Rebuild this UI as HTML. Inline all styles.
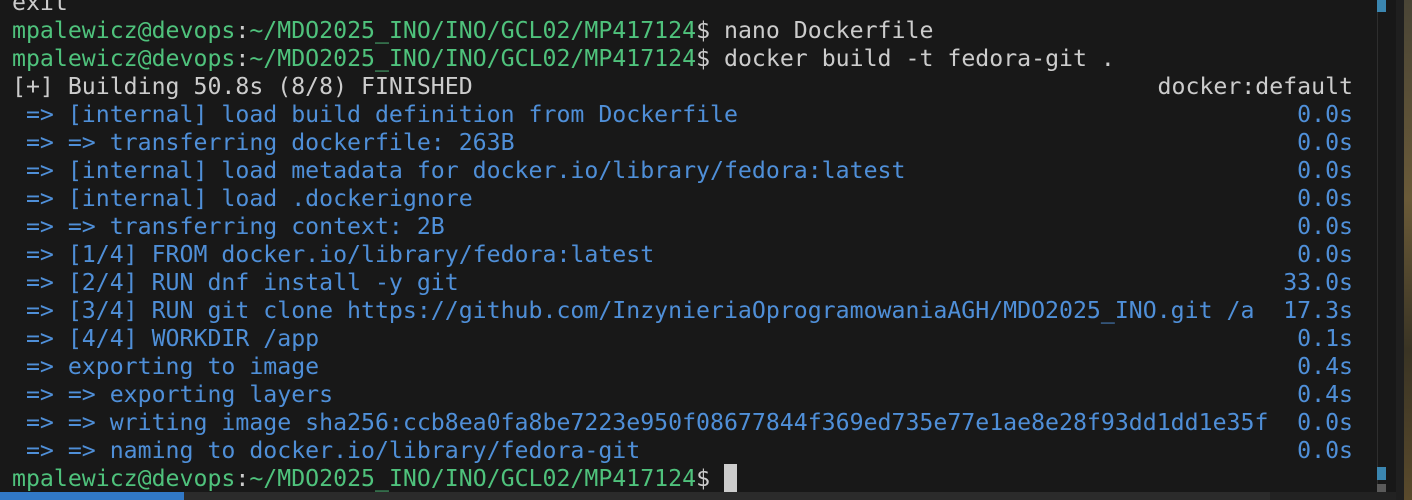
<!DOCTYPE html>
<html><head><meta charset="utf-8"><style>
html,body{margin:0;padding:0;}
body{width:1412px;height:500px;background:#181818;position:relative;overflow:hidden;font-family:"DejaVu Sans Mono","Liberation Mono",monospace;font-size:23.2px;}
.l{position:absolute;left:12px;height:28px;line-height:28px;white-space:pre;color:#cccccc;}
.r{position:absolute;right:59px;height:28px;line-height:28px;white-space:pre;color:#4f8fd8;}
.g{color:#4fc27c}.w{color:#cccccc}.b{color:#4f8fd8}
</style></head><body>
<div class="l" style="top:-11px">exit</div>
<div class="l" style="top:17px"><span class="g">mpalewicz@devops</span><span class="w">:</span><span class="g">~/MDO2025_INO/INO/GCL02/MP417124</span>$ nano Dockerfile</div>
<div class="l" style="top:45px"><span class="g">mpalewicz@devops</span><span class="w">:</span><span class="g">~/MDO2025_INO/INO/GCL02/MP417124</span>$ docker build -t fedora-git .</div>
<div class="l" style="top:73px">[+] Building 50.8s (8/8) FINISHED</div><div class="r" style="top:73px;color:#cccccc">docker:default</div>
<div class="l b" style="top:101px"> =&gt; [internal] load build definition from Dockerfile</div><div class="r" style="top:101px">0.0s</div>
<div class="l b" style="top:129px"> =&gt; =&gt; transferring dockerfile: 263B</div><div class="r" style="top:129px">0.0s</div>
<div class="l b" style="top:157px"> =&gt; [internal] load metadata for docker.io/library/fedora:latest</div><div class="r" style="top:157px">0.0s</div>
<div class="l b" style="top:185px"> =&gt; [internal] load .dockerignore</div><div class="r" style="top:185px">0.0s</div>
<div class="l b" style="top:213px"> =&gt; =&gt; transferring context: 2B</div><div class="r" style="top:213px">0.0s</div>
<div class="l b" style="top:241px"> =&gt; [1/4] FROM docker.io/library/fedora:latest</div><div class="r" style="top:241px">0.0s</div>
<div class="l b" style="top:269px"> =&gt; [2/4] RUN dnf install -y git</div><div class="r" style="top:269px">33.0s</div>
<div class="l b" style="top:297px"> =&gt; [3/4] RUN git clone https://github.com/InzynieriaOprogramowaniaAGH/MDO2025_INO.git /a</div><div class="r" style="top:297px">17.3s</div>
<div class="l b" style="top:325px"> =&gt; [4/4] WORKDIR /app</div><div class="r" style="top:325px">0.1s</div>
<div class="l b" style="top:353px"> =&gt; exporting to image</div><div class="r" style="top:353px">0.4s</div>
<div class="l b" style="top:381px"> =&gt; =&gt; exporting layers</div><div class="r" style="top:381px">0.4s</div>
<div class="l b" style="top:409px"> =&gt; =&gt; writing image sha256:ccb8ea0fa8be7223e950f08677844f369ed735e77e1ae8e28f93dd1dd1e35f</div><div class="r" style="top:409px">0.0s</div>
<div class="l b" style="top:437px"> =&gt; =&gt; naming to docker.io/library/fedora-git</div><div class="r" style="top:437px">0.0s</div>
<div class="l" style="top:465px"><span class="g">mpalewicz@devops</span><span class="w">:</span><span class="g">~/MDO2025_INO/INO/GCL02/MP417124</span>$ </div>
<div style="position:absolute;left:724px;top:464px;width:13px;height:28px;background:#cccccc"></div>
<div style="position:absolute;left:1377px;top:0;width:1px;height:492px;background:#2e2e2e"></div>
<div style="position:absolute;left:1377px;top:0;width:9px;height:12px;background:#3b86b0"></div>
<div style="position:absolute;left:1377px;top:467px;width:9px;height:13px;background:#3b86b0"></div>
<div style="position:absolute;left:1377px;top:484px;width:9px;height:8px;background:#5a5a5a"></div>
<div style="position:absolute;left:1396px;top:0;width:8px;height:500px;background:#1f1f1f"></div>
<div style="position:absolute;left:1404px;top:0;width:8px;height:500px;background:linear-gradient(#4a4536,#6a5a38 40%,#3a3424 70%,#5a4a2c)"></div>
<div style="position:absolute;left:0;top:492px;width:1396px;height:8px;background:#222"></div>
<div style="position:absolute;left:0;top:492px;width:1270px;height:8px;background:#2b2b2b"></div>
<div style="position:absolute;left:0;top:492px;width:184px;height:8px;background:#3178c6"></div>
</body></html>
